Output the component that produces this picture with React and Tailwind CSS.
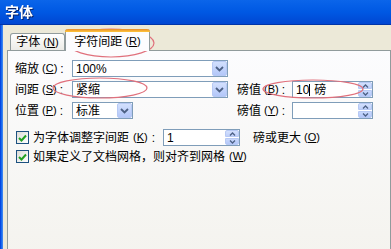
import React from "react";

const FONT = "font-['Liberation_Sans','Noto_Sans_CJK_SC',sans-serif]";

function Key({ k }) {
  return (
    <span className="text-[11px]">
      (<span className="underline underline-offset-1">{k}</span>)
    </span>
  );
}

function DropBtn() {
  return (
    <div className="w-[15px] h-[15px] rounded-[2px] border border-[#B7C9F4] bg-gradient-to-b from-[#D3E0FD] to-[#B3C7F9] flex items-center justify-center">
      <svg width="9" height="6" viewBox="0 0 9 6">
        <path d="M1 1 L4.5 4.5 L8 1" fill="none" stroke="#4D6185" strokeWidth="1.8" />
      </svg>
    </div>
  );
}

function Spin() {
  return (
    <div className="w-[14px] h-[15px] flex flex-col gap-px">
      <div className="flex-1 rounded-t-[2px] border border-[#B7C9F4] bg-gradient-to-b from-[#D3E0FD] to-[#BFD0FA] flex items-center justify-center">
        <svg width="7" height="4" viewBox="0 0 7 4">
          <path d="M1 3.5 L3.5 1 L6 3.5" fill="none" stroke="#4D6185" strokeWidth="1.3" />
        </svg>
      </div>
      <div className="flex-1 rounded-b-[2px] border border-[#B7C9F4] bg-gradient-to-b from-[#C8D8FC] to-[#B3C7F9] flex items-center justify-center">
        <svg width="7" height="4" viewBox="0 0 7 4">
          <path d="M1 0.5 L3.5 3 L6 0.5" fill="none" stroke="#4D6185" strokeWidth="1.3" />
        </svg>
      </div>
    </div>
  );
}

function Combo({ value, w }) {
  return (
    <div className={"h-[17px] border border-[#7F9DB9] bg-white flex items-center justify-between pl-[3px] " + w}>
      <span className="text-[12px] leading-none">{value}</span>
      <DropBtn />
    </div>
  );
}

function SpinBox({ children, w }) {
  return (
    <div className={"h-[17px] border border-[#7F9DB9] bg-white flex items-center justify-between pl-[3px] " + w}>
      <span className="text-[12px] leading-none flex items-center">{children}</span>
      <Spin />
    </div>
  );
}

function Check() {
  return (
    <div className="w-[13px] h-[13px] border border-[#1C5180] bg-gradient-to-br from-[#DCDCD7] to-white flex items-center justify-center shrink-0">
      <svg width="9" height="8" viewBox="0 0 9 8">
        <path d="M1 4 L3.5 6.5 L8 1.5" fill="none" stroke="#21A121" strokeWidth="2" />
      </svg>
    </div>
  );
}

function Label({ text, k, w }) {
  return (
    <div className={"flex items-center gap-[3px] " + w}>
      <span>{text}</span>
      <Key k={k} />
      <span>:</span>
    </div>
  );
}

export default function App() {
  return (
    <div className={"relative w-[391px] h-[249px] overflow-hidden bg-[#ECE9D8] text-black " + FONT}>
      <div className="h-[25px] bg-gradient-to-b from-[#0B65EA] via-[#0058E3] to-[#0046D2] border-b border-[#0034A8] flex items-center pl-[5px]">
        <span className="text-white font-bold text-[14px] drop-shadow-[1px_1px_0_#0A246A]">字体</span>
      </div>
      <div className="flex h-[224px]">
        <div className="w-[3px] bg-gradient-to-r from-[#0831D9] via-[#166AEE] to-[#4A8CF0]" />
        <div className="flex-1 pl-[4px]">
          <div className="h-[25px] flex items-end pl-[3px]">
            <div className="w-[55px] h-[17px] border border-b-0 border-[#919B9C] rounded-t-[3px] bg-gradient-to-b from-white to-[#ECEBE6] flex items-center justify-center text-[12px] gap-[3px]">
              <span>字体</span>
              <Key k="N" />
            </div>
            <div className="relative z-10 -mb-px w-[85px] h-[22px] border-x border-[#919B9C] rounded-t-[3px] bg-[#FCFCFE] flex flex-col">
              <div className="h-[3px] rounded-t-[3px] bg-gradient-to-b from-[#E68B2C] to-[#FFC73C] -mx-px" />
              <div className="flex-1 flex items-center justify-center gap-[3px] text-[12px]">
                <span>字符间距</span>
                <Key k="R" />
              </div>
            </div>
          </div>
          <div className="h-[210px] border border-[#919B9C] bg-gradient-to-b from-[#FCFCFE] to-[#F4F3EE] pl-[7px] pt-[9px] text-[12px]">
            <div className="flex items-center h-[17px]">
              <Label text="缩放" k="C" w="w-[57px]" />
              <Combo value="100%" w="w-[156px]" />
            </div>
            <div className="flex items-center h-[17px] mt-[4px]">
              <Label text="间距" k="S" w="w-[57px]" />
              <Combo value="紧缩" w="w-[156px]" />
              <Label text="磅值" k="B" w="w-[55px] ml-[9px]" />
              <SpinBox w="w-[81px]">
                <span>10</span>
                <span className="w-px h-[12px] bg-black" />
                <span className="ml-[4px]">磅</span>
              </SpinBox>
            </div>
            <div className="flex items-center h-[17px] mt-[4px]">
              <Label text="位置" k="P" w="w-[57px]" />
              <div className="w-[156px]">
                <Combo value="标准" w="w-[61px]" />
              </div>
              <Label text="磅值" k="Y" w="w-[55px] ml-[9px]" />
              <SpinBox w="w-[81px]" />
            </div>
            <div className="flex items-center h-[17px] mt-[10px]">
              <div className="w-[148px] flex items-center pl-px gap-[4px]">
                <Check />
                <span>为字体调整字间距</span>
                <Key k="K" />
                <span>:</span>
              </div>
              <SpinBox w="w-[77px]">
                <span>1</span>
              </SpinBox>
              <div className="ml-[13px] flex items-center gap-[3px]">
                <span>磅或更大</span>
                <Key k="O" />
              </div>
            </div>
            <div className="flex items-center h-[13px] mt-[4px] pl-px gap-[4px]">
              <Check />
              <span>如果定义了文档网格，则对齐到网格</span>
              <Key k="W" />
            </div>
          </div>
        </div>
      </div>
      <svg className="absolute inset-0 pointer-events-none" width="391" height="249">
        <ellipse cx="111" cy="43" rx="43" ry="14" fill="none" stroke="#E0707C" strokeWidth="1.2" />
        <ellipse cx="100" cy="88" rx="47" ry="10" fill="none" stroke="#E0707C" strokeWidth="1.2" />
        <ellipse cx="313" cy="89" rx="50" ry="9" fill="none" stroke="#E0707C" strokeWidth="1.2" />
      </svg>
    </div>
  );
}
